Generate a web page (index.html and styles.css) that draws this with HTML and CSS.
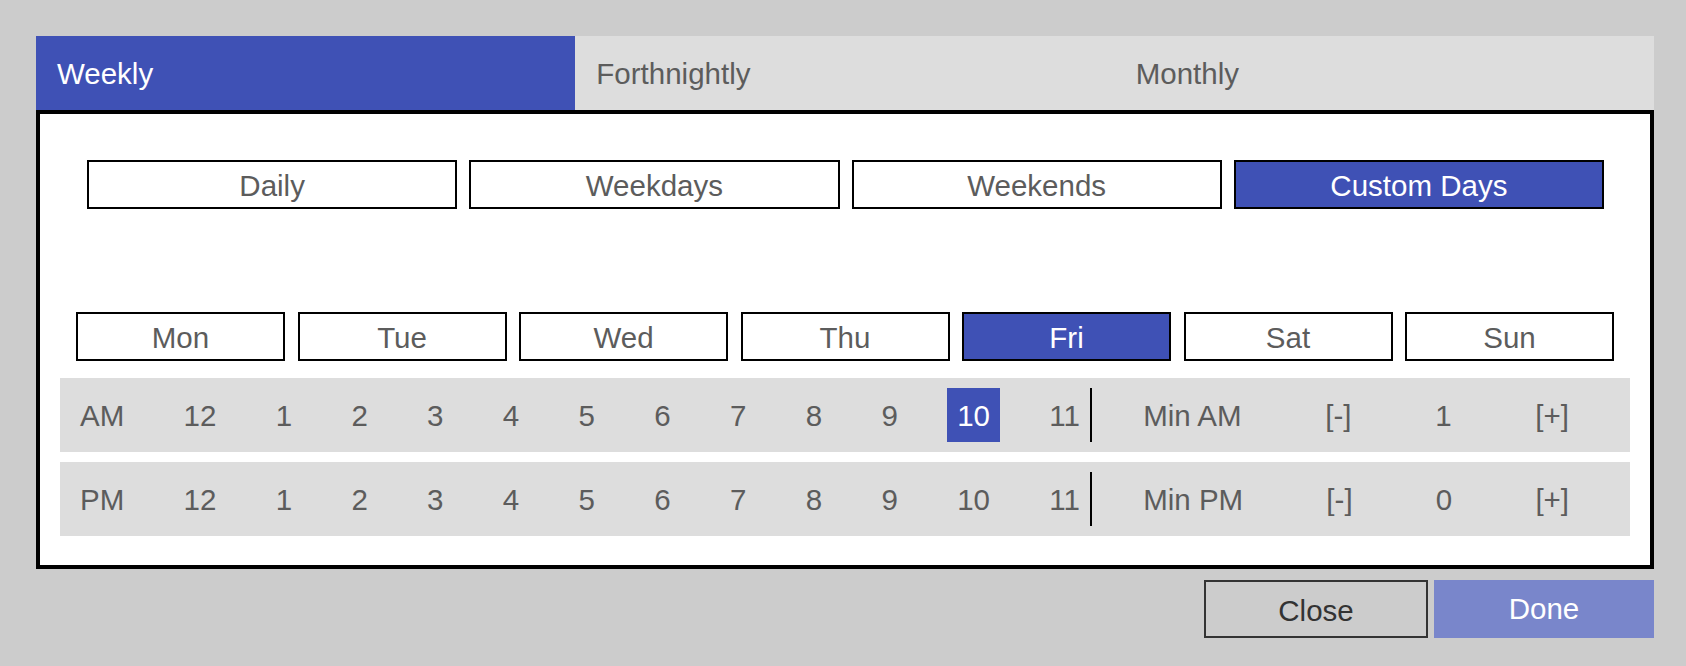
FILE: index.html
```html
<!DOCTYPE html>
<html>
<head>
<meta charset="utf-8">
<link rel="stylesheet" href="styles.css">
</head>
<body>
<div class="page">
  <div class="tabs">
    <div class="tab active">Weekly</div>
    <div class="tab">Forthnightly</div>
    <div class="tab">Monthly</div>
  </div>
  <div class="panel">
    <div class="modes">
      <div class="box">Daily</div>
      <div class="box">Weekdays</div>
      <div class="box">Weekends</div>
      <div class="box selected">Custom Days</div>
    </div>
    <div class="days">
      <div class="box">Mon</div>
      <div class="box">Tue</div>
      <div class="box">Wed</div>
      <div class="box">Thu</div>
      <div class="box selected">Fri</div>
      <div class="box">Sat</div>
      <div class="box">Sun</div>
    </div>
    <div class="trow">
      <span class="cell">AM</span>
      <span class="cell">12</span>
      <span class="cell">1</span>
      <span class="cell">2</span>
      <span class="cell">3</span>
      <span class="cell">4</span>
      <span class="cell">5</span>
      <span class="cell">6</span>
      <span class="cell">7</span>
      <span class="cell">8</span>
      <span class="cell">9</span>
      <span class="cell on">10</span>
      <span class="cell sep">11</span>
      <div class="mins">
        <span>Min AM</span>
        <span>[-]</span>
        <span>1</span>
        <span>[+]</span>
      </div>
    </div>
    <div class="trow">
      <span class="cell">PM</span>
      <span class="cell">12</span>
      <span class="cell">1</span>
      <span class="cell">2</span>
      <span class="cell">3</span>
      <span class="cell">4</span>
      <span class="cell">5</span>
      <span class="cell">6</span>
      <span class="cell">7</span>
      <span class="cell">8</span>
      <span class="cell">9</span>
      <span class="cell">10</span>
      <span class="cell sep">11</span>
      <div class="mins">
        <span>Min PM</span>
        <span>[-]</span>
        <span>0</span>
        <span>[+]</span>
      </div>
    </div>
  </div>
  <div class="actions">
    <div class="btn close">Close</div>
    <div class="btn done">Done</div>
  </div>
</div>
</body>
</html>
```
FILE: styles.css
```css
* { box-sizing: border-box; }
html, body {
  margin: 0;
  padding: 0;
  background: #cccccc;
  height: 100%;
}
body {
  font-family: "Liberation Sans", Arial, Helvetica, sans-serif;
  font-size: 29.5px;
  color: #5c5c5c;
}
.page {
  padding: 36px 32px 0 36px;
}
.tabs {
  display: flex;
  height: 74px;
  background: #dddddd;
}
.tab {
  flex: 1;
  display: flex;
  align-items: center;
  padding: 2px 0 0 21px;
  color: #5c5c5c;
}
.tab.active {
  background: #3f51b5;
  color: #ffffff;
}
.panel {
  background: #ffffff;
  border: 4px solid #000000;
  padding: 46px 20px 29px 20px;
}
.modes {
  display: flex;
  gap: 12px;
  margin: 0 26px 0 27px;
}
.box {
  flex: 1;
  height: 49px;
  border: 2px solid #000000;
  display: flex;
  align-items: center;
  justify-content: center;
  padding-top: 2px;
  background: #ffffff;
  color: #5c5c5c;
}
.box.selected {
  background: #3f51b5;
  color: #ffffff;
}
.days {
  display: flex;
  gap: 12.5px;
  margin: 103px 16px 17px 16px;
}
.trow {
  display: flex;
  align-items: center;
  height: 74px;
  background: #dddddd;
  padding: 0 10px;
  gap: 39.3px;
}
.trow + .trow {
  margin-top: 10px;
}
.cell {
  height: 54px;
  padding: 2px 10px 0 10px;
  display: flex;
  align-items: center;
}
.cell.on {
  background: #3f51b5;
  color: #ffffff;
}
.cell.sep {
  border-right: 2px solid #000000;
}
.mins {
  flex: 1;
  display: flex;
  justify-content: space-between;
  align-items: center;
  padding: 2px 51px 0 12px;
}
.actions {
  display: flex;
  justify-content: flex-end;
  gap: 6px;
  margin-top: 11px;
}
.btn {
  height: 58px;
  display: flex;
  align-items: center;
  justify-content: center;
}
.btn.close {
  width: 224px;
  border: 2px solid #333333;
  color: #333333;
  padding-top: 3px;
}
.btn.done {
  width: 220px;
  background: #7986cb;
  color: #ffffff;
}
```
